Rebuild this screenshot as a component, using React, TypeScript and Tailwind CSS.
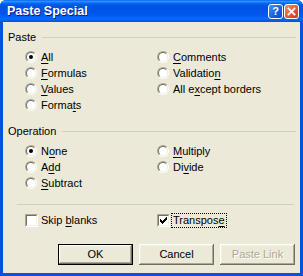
import React from "react";

function Acc({ text, k }: { text: string; k: number }) {
  if (k < 0) return <>{text}</>;
  return (
    <>
      {text.slice(0, k)}
      <span className="underline underline-offset-[2px]">{text[k]}</span>
      {text.slice(k + 1)}
    </>
  );
}

function Radio({ checked }: { checked?: boolean }) {
  return (
    <span className="flex w-[12px] h-[12px] rounded-full border border-t-[#ACA899] border-l-[#ACA899] border-b-white border-r-white">
      <span className="flex flex-1 items-center justify-center rounded-full border border-t-[#716F64] border-l-[#716F64] border-b-[#F1EFE2] border-r-[#F1EFE2] bg-white">
        {checked && <span className="w-[4px] h-[4px] rounded-full bg-black" />}
      </span>
    </span>
  );
}

function Check({ checked }: { checked?: boolean }) {
  const cols = [2, 3, 4, 3, 2, 1, 0];
  return (
    <span className="flex w-[13px] h-[13px] border border-t-[#ACA899] border-l-[#ACA899] border-b-white border-r-white">
      <span className="flex flex-1 items-center justify-center border border-t-[#716F64] border-l-[#716F64] border-b-[#F1EFE2] border-r-[#F1EFE2] bg-white">
        {checked && (
          <svg width="7" height="7" viewBox="0 0 7 7" shapeRendering="crispEdges">
            {cols.map((y, x) => (
              <rect key={x} x={x} y={y} width="1" height="3" fill="#000" />
            ))}
          </svg>
        )}
      </span>
    </span>
  );
}

function RadioRow({ text, k, checked }: { text: string; k: number; checked?: boolean }) {
  return (
    <div className="flex h-[16px] items-center">
      <span className="flex w-[16px]">
        <Radio checked={checked} />
      </span>
      <span>
        <Acc text={text} k={k} />
      </span>
    </div>
  );
}

function CheckRow({ text, k, checked, focus }: { text: string; k: number; checked?: boolean; focus?: boolean }) {
  return (
    <div className="flex h-[16px] items-center">
      <span className="flex w-[14px]">
        <Check checked={checked} />
      </span>
      <span className={"border pl-[1px] pr-[1px] " + (focus ? "border-dotted border-black" : "border-transparent")}>
        <Acc text={text} k={k} />
      </span>
    </div>
  );
}

function GroupHeader({ title }: { title: string }) {
  return (
    <div className="flex h-[13px] items-center pl-[5px] pr-[4px]">
      <span>{title}</span>
      <div className="ml-[6px] h-px flex-1 bg-[#D0D0BF]" />
    </div>
  );
}

const btn =
  "flex w-[75px] h-[21px] items-center justify-center bg-[#ECE9D8] shadow-[inset_-1px_-1px_#716F64,inset_1px_1px_#fff,inset_-2px_-2px_#ACA899,inset_2px_2px_#F1EFE2]";

export default function App() {
  return (
    <div className="flex h-[276px] w-[303px] flex-col overflow-hidden rounded-t-[6px] bg-[#0A4FE0] text-[11px] leading-[13px] text-black font-['Tahoma','Liberation_Sans',sans-serif]">
      <div className="flex h-[22px] items-center bg-[linear-gradient(to_bottom,#0058ee_0%,#3593ff_5%,#288eff_8%,#127dff_11%,#036ffc_14%,#0262ee_18%,#0057e5_24%,#0054e3_30%,#0055eb_60%,#005bf5_72%,#026afe_84%,#0062ef_92%,#0052d6_100%)] pl-[7px] pr-[4px]">
        <span className="text-[12.5px] font-bold text-white [text-shadow:1px_1px_0_#0a1883] font-['Liberation_Sans',sans-serif]">
          Paste Special
        </span>
        <div className="ml-auto flex gap-[1px]">
          <div className="flex h-[15px] w-[15px] items-center justify-center rounded-[3px] border border-white bg-[linear-gradient(135deg,#4c8dff,#1a5fe0_60%,#0d47c8)] text-[11px] font-bold leading-none text-white font-['Liberation_Sans',sans-serif]">
            ?
          </div>
          <div className="flex h-[15px] w-[15px] items-center justify-center rounded-[3px] border border-white bg-[linear-gradient(135deg,#f0906c,#e05a38_55%,#c23c1c)]">
            <svg width="9" height="9" viewBox="0 0 9 9">
              <path d="M1.5 1.5 L7.5 7.5 M7.5 1.5 L1.5 7.5" stroke="#fff" strokeWidth="1.8" strokeLinecap="square" />
            </svg>
          </div>
        </div>
      </div>

      <div className="mx-[3px] mb-[3px] flex flex-1 flex-col bg-[#ECE9D8] pt-[9px]">
        <GroupHeader title="Paste" />
        <div className="mt-[5px] flex pl-[22px]">
          <div className="flex w-[132px] flex-col">
            <RadioRow text="All" k={0} checked />
            <RadioRow text="Formulas" k={0} />
            <RadioRow text="Values" k={0} />
            <RadioRow text="Formats" k={5} />
          </div>
          <div className="flex flex-col">
            <RadioRow text="Comments" k={0} />
            <RadioRow text="Validation" k={9} />
            <RadioRow text="All except borders" k={5} />
          </div>
        </div>

        <div className="mt-[12px]">
          <GroupHeader title="Operation" />
        </div>
        <div className="mt-[5px] flex pl-[22px]">
          <div className="flex w-[132px] flex-col">
            <RadioRow text="None" k={1} checked />
            <RadioRow text="Add" k={1} />
            <RadioRow text="Subtract" k={0} />
          </div>
          <div className="flex flex-col">
            <RadioRow text="Multiply" k={0} />
            <RadioRow text="Divide" k={2} />
          </div>
        </div>

        <div className="ml-[14px] mr-[6px] mt-[13px] h-px bg-[#D0D0BF]" />

        <div className="mt-[7px] flex pl-[22px]">
          <div className="w-[132px]">
            <CheckRow text="Skip blanks" k={5} />
          </div>
          <CheckRow text="Transpose" k={8} checked focus />
        </div>

        <div className="mt-[16px] flex justify-end gap-[6px] pr-[5px]">
          <div className={btn + " border border-black"}>OK</div>
          <div className={btn}>Cancel</div>
          <div className={btn + " text-[#ACA899] [text-shadow:1px_1px_0_#fff]"}>Paste Link</div>
        </div>
      </div>
    </div>
  );
}
